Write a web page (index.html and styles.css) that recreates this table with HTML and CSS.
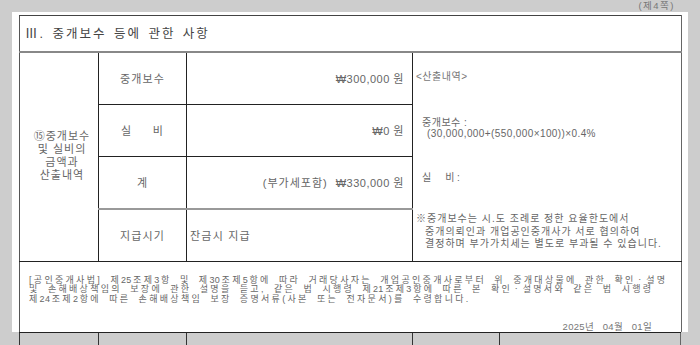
FILE: index.html
```html
<!DOCTYPE html>
<html lang="ko">
<head>
<meta charset="utf-8">
<title>중개보수 등에 관한 사항</title>
<link rel="stylesheet" href="styles.css">
</head>
<body>
<div class="sheet">
  <div class="pageno">(제4쪽)</div>
  <div class="page">
    <table class="form">
      <colgroup>
        <col class="c1"><col class="c2"><col class="c3"><col class="c4">
      </colgroup>
      <tr class="title-row">
        <td colspan="4" class="title">Ⅲ. 중개보수 등에 관한 사항</td>
      </tr>
      <tr class="r">
        <td rowspan="4" class="side">⑮중개보수<br>및 실비의<br>금액과<br>산출내역</td>
        <td class="label">중개보수</td>
        <td class="amount">₩300,000 원</td>
        <td rowspan="4" class="calc">
          <div class="b1">&lt;산출내역&gt;</div>
          <div class="b2"><div class="in1">중개보수 :</div><div class="in2">(30,000,000+(550,000×100))×0.4%</div></div>
          <div class="b3 in1"><span class="spread sm">실<span>비</span></span> :</div>
          <div class="b4">
            <div>※중개보수는 시.도 조례로 정한 요율한도에서</div>
            <div class="in2b">중개의뢰인과 개업공인중개사가 서로 협의하여</div>
            <div class="in2b">결정하며 부가가치세는 별도로 부과될 수 있습니다.</div>
          </div>
        </td>
      </tr>
      <tr class="r">
        <td class="label"><span class="spread">실<span>비</span></span></td>
        <td class="amount">₩0 원</td>
      </tr>
      <tr class="r r3">
        <td class="label">계</td>
        <td class="amount"><span class="vat">(부가세포함)</span>₩330,000 원</td>
      </tr>
      <tr class="r r4">
        <td class="label">지급시기</td>
        <td class="text">잔금시 지급</td>
      </tr>
      <tr>
        <td colspan="4" class="foot">
          <div class="foot-in">
            <p class="law">[공인중개사법] 제<span class="num">25</span>조제<span class="num">3</span>항 및 제<span class="num">30</span>조제<span class="num">5</span>항에 따라 거래당사자는 개업공인중개사로부터 위 중개대상물에 관한 확인ㆍ설명<br>및 손해배상책임의 보장에 관한 설명을 듣고, 같은 법 시행령 제<span class="num">21</span>조제<span class="num">3</span>항에 따른 본 확인ㆍ설명서와 같은 법 시행령<br>제<span class="num">24</span>조제<span class="num">2</span>항에 따른 손해배상책임 보장 증명서류(사본 또는 전자문서)를 수령합니다.</p>
            <p class="date">2025년&nbsp;&nbsp;&nbsp;04월&nbsp;&nbsp;&nbsp;01일</p>
          </div>
        </td>
      </tr>
    </table>
  </div>
  <div class="next">
    <div class="n1"></div><div class="n2"></div><div class="n3"></div><div class="n4"></div><div class="n5"></div>
  </div>
</div>
</body>
</html>
```

FILE: styles.css
```css
html, body {
  margin: 0;
  padding: 0;
}
body {
  background: #cdcdcd;
  font-family: "Liberation Sans", "Noto Sans CJK KR", sans-serif;
  color: #666;
}
.sheet {
  width: 700px;
  height: 345px;
  overflow: hidden;
  display: flex;
  flex-direction: column;
}
.pageno {
  flex: 0 0 12px;
  line-height: 11px;
  font-size: 9.5px;
  text-align: right;
  padding-right: 25px;
  color: #777;
  letter-spacing: 1.5px;
}
.page {
  flex: 0 0 320px;
  background: #fff;
  margin-left: 12px;
  width: 676px;
  padding: 3px 0 0 7px;
  box-sizing: border-box;
  overflow: hidden;
}
.form {
  border-collapse: collapse;
  table-layout: fixed;
  width: 662px;
  border-top: 1px solid #444;
  border-left: 1px solid #555;
  border-right: 1px solid #666;
}
.form td {
  padding: 0;
  font-size: 11px;
  line-height: 12px;
}
col.c1 { width: 79px; }
col.c2 { width: 88px; }
col.c3 { width: 226px; }
col.c4 { width: 269px; }

.form td.title {
  height: 35px;
  border-bottom: 2px solid #888;
  padding-left: 5px;
  font-size: 12.5px;
  color: #444;
  letter-spacing: 2px;
  word-spacing: 2px;
  vertical-align: middle;
}
.r td { height: 51px; }
.r td.label, .r td.amount, .r td.text {
  border-bottom: 1px solid #222;
  vertical-align: middle;
}
.r3 td.label, .r3 td.amount {
  border-bottom: 2px solid #999;
}
.form td.side {
  border-right: 1px solid #222;
  border-bottom: 1px solid #222;
  text-align: center;
  vertical-align: middle;
  line-height: 12.8px;
  padding-left: 6px;
  letter-spacing: 1px;
  padding-bottom: 2px;
}
.label {
  border-right: 1px solid #222;
  text-align: center;
  letter-spacing: 1.1px;
}
.spread {
  display: inline-flex;
  justify-content: space-between;
  width: 43px;
}
.spread.sm {
  width: 33px;
  margin-right: 2px;
}
.form td.amount {
  border-right: 1px solid #222;
  text-align: right;
  padding-right: 8px;
  letter-spacing: 0.5px;
}
.vat {
  margin-right: 8px;
  letter-spacing: 1px;
}
.form td.text {
  border-right: 1px solid #222;
  padding-left: 3px;
  letter-spacing: 1.2px;
}
.form td.calc {
  vertical-align: top;
  padding-left: 3px;
  border-bottom: 1px solid #222;
  font-size: 10px;
  letter-spacing: 0.5px;
}
.b1 { padding-top: 18px; line-height: 12px; color: #777; }
.b2 { margin-top: 34px; line-height: 11px; }
.b3 { margin-top: 33px; line-height: 12px; display: flex; }
.b4 { margin-top: 29px; line-height: 12.5px; letter-spacing: 1px; white-space: nowrap; }
.in1 { padding-left: 6px; }
.in2 { padding-left: 11px; letter-spacing: 0.4px; }
.in2b { padding-left: 9px; }

.foot {
  vertical-align: top;
}
.foot-in {
  height: 73px;
  box-sizing: border-box;
  padding: 14px 29px 0 9px;
  display: flex;
  flex-direction: column;
}
.law {
  margin: 0;
  font-size: 9px;
  line-height: 9.3px;
  white-space: nowrap;
  letter-spacing: 2.3px;
  word-spacing: 3.5px;
  color: #666;
}
.law .num {
  letter-spacing: 0.3px;
  margin-right: 1.5px;
}
.date {
  margin: 18px 0 0;
  text-align: right;
  font-size: 9.5px;
  line-height: 10px;
  letter-spacing: 0.3px;
  color: #777;
}
.next {
  flex: 0 0 13px;
  margin-left: 19px;
  width: 662px;
  box-sizing: border-box;
  border-top: 1px solid #222;
  display: flex;
}
.next div {
  border-left: 1px solid #333;
  box-sizing: border-box;
}
.n1 { width: 79px; }
.n2 { width: 88px; }
.n3 { width: 226px; }
.n4 { width: 87px; }
.n5 { width: 182px; border-right: 1px solid #666; }
```
